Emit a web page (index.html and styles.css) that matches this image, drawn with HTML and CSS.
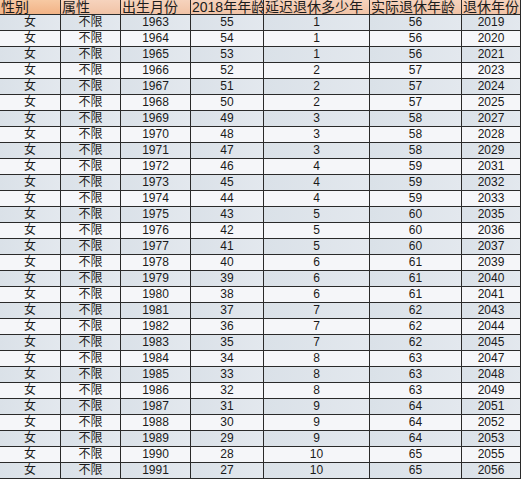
FILE: index.html
```html
<!DOCTYPE html>
<html lang="zh">
<head>
<meta charset="utf-8">
<link rel="stylesheet" href="styles.css">
</head>
<body>
<table class="sheet">
  <colgroup>
    <col class="c1"><col class="c2"><col class="c3"><col class="c4"><col class="c5"><col class="c6"><col class="c7">
  </colgroup>
  <thead>
    <tr><th class="first">性别</th><th>属性</th><th>出生月份</th><th>2018年年龄</th><th>延迟退休多少年</th><th>实际退休年龄</th><th>退休年份</th></tr>
  </thead>
  <tbody>
    <tr><td>女</td><td>不限</td><td>1963</td><td>55</td><td>1</td><td>56</td><td>2019</td></tr>
    <tr><td>女</td><td>不限</td><td>1964</td><td>54</td><td>1</td><td>56</td><td>2020</td></tr>
    <tr><td>女</td><td>不限</td><td>1965</td><td>53</td><td>1</td><td>56</td><td>2021</td></tr>
    <tr><td>女</td><td>不限</td><td>1966</td><td>52</td><td>2</td><td>57</td><td>2023</td></tr>
    <tr><td>女</td><td>不限</td><td>1967</td><td>51</td><td>2</td><td>57</td><td>2024</td></tr>
    <tr><td>女</td><td>不限</td><td>1968</td><td>50</td><td>2</td><td>57</td><td>2025</td></tr>
    <tr><td>女</td><td>不限</td><td>1969</td><td>49</td><td>3</td><td>58</td><td>2027</td></tr>
    <tr><td>女</td><td>不限</td><td>1970</td><td>48</td><td>3</td><td>58</td><td>2028</td></tr>
    <tr><td>女</td><td>不限</td><td>1971</td><td>47</td><td>3</td><td>58</td><td>2029</td></tr>
    <tr><td>女</td><td>不限</td><td>1972</td><td>46</td><td>4</td><td>59</td><td>2031</td></tr>
    <tr><td>女</td><td>不限</td><td>1973</td><td>45</td><td>4</td><td>59</td><td>2032</td></tr>
    <tr><td>女</td><td>不限</td><td>1974</td><td>44</td><td>4</td><td>59</td><td>2033</td></tr>
    <tr><td>女</td><td>不限</td><td>1975</td><td>43</td><td>5</td><td>60</td><td>2035</td></tr>
    <tr><td>女</td><td>不限</td><td>1976</td><td>42</td><td>5</td><td>60</td><td>2036</td></tr>
    <tr><td>女</td><td>不限</td><td>1977</td><td>41</td><td>5</td><td>60</td><td>2037</td></tr>
    <tr><td>女</td><td>不限</td><td>1978</td><td>40</td><td>6</td><td>61</td><td>2039</td></tr>
    <tr><td>女</td><td>不限</td><td>1979</td><td>39</td><td>6</td><td>61</td><td>2040</td></tr>
    <tr><td>女</td><td>不限</td><td>1980</td><td>38</td><td>6</td><td>61</td><td>2041</td></tr>
    <tr><td>女</td><td>不限</td><td>1981</td><td>37</td><td>7</td><td>62</td><td>2043</td></tr>
    <tr><td>女</td><td>不限</td><td>1982</td><td>36</td><td>7</td><td>62</td><td>2044</td></tr>
    <tr><td>女</td><td>不限</td><td>1983</td><td>35</td><td>7</td><td>62</td><td>2045</td></tr>
    <tr><td>女</td><td>不限</td><td>1984</td><td>34</td><td>8</td><td>63</td><td>2047</td></tr>
    <tr><td>女</td><td>不限</td><td>1985</td><td>33</td><td>8</td><td>63</td><td>2048</td></tr>
    <tr><td>女</td><td>不限</td><td>1986</td><td>32</td><td>8</td><td>63</td><td>2049</td></tr>
    <tr><td>女</td><td>不限</td><td>1987</td><td>31</td><td>9</td><td>64</td><td>2051</td></tr>
    <tr><td>女</td><td>不限</td><td>1988</td><td>30</td><td>9</td><td>64</td><td>2052</td></tr>
    <tr><td>女</td><td>不限</td><td>1989</td><td>29</td><td>9</td><td>64</td><td>2053</td></tr>
    <tr><td>女</td><td>不限</td><td>1990</td><td>28</td><td>10</td><td>65</td><td>2055</td></tr>
    <tr><td>女</td><td>不限</td><td>1991</td><td>27</td><td>10</td><td>65</td><td>2056</td></tr>
  </tbody>
</table>
</body>
</html>
```

FILE: styles.css
```css
html, body {
  margin: 0;
  padding: 0;
  background: #ffffff;
}

.sheet {
  border-collapse: separate;
  border-spacing: 0;
  table-layout: fixed;
  width: 521px;
  font-family: "Liberation Sans", "Noto Sans CJK SC", sans-serif;
  color: #1a1a1a;
}

.c1 { width: 61px; }
.c2 { width: 60px; }
.c3 { width: 70px; }
.c4 { width: 73px; }
.c5 { width: 106px; }
.c6 { width: 92px; }
.c7 { width: 59px; }

.sheet th,
.sheet td {
  box-sizing: border-box;
  padding: 0;
  border-right: 1px solid #2a2a2a;
  border-bottom: 1px solid #2a2a2a;
  white-space: nowrap;
  overflow: hidden;
}

.sheet th {
  height: 15px;
  line-height: 14px;
  font-size: 14px;
  font-weight: normal;
  text-align: left;
  padding-left: 1px;
  color: #1c1c1c;
  background: linear-gradient(to bottom, #f6d3bd, #f1c3a6);
}

.sheet th.first {
  background: linear-gradient(to bottom, #f7c9a3, #f2b386);
}

.sheet td {
  height: 16px;
  line-height: 15px;
  font-size: 12px;
  text-align: center;
  background: #f5f6f9;
}

.sheet tbody tr:nth-child(odd) td {
  background: linear-gradient(to right, #dae1e8, #e3e8ee);
}
```
